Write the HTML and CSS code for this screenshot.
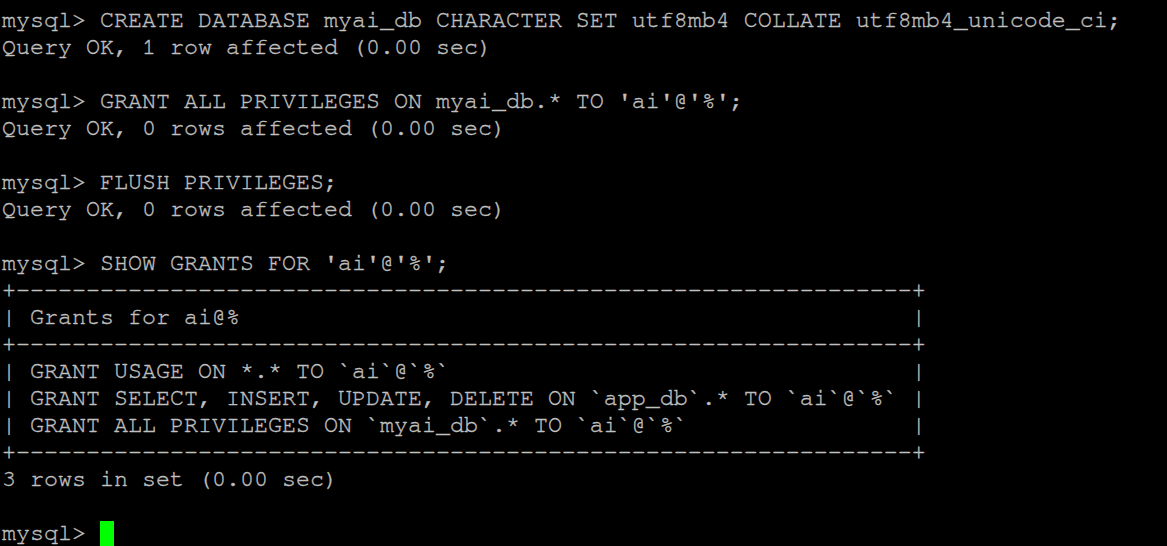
FILE: index.html
```html
<!DOCTYPE html>
<html>
<head>
<meta charset="utf-8">
<link rel="stylesheet" href="styles.css">
</head>
<body>
<pre class="term">mysql&gt; CREATE DATABASE myai_db CHARACTER SET utf8mb4 COLLATE utf8mb4_unicode_ci;
Query OK, 1 row affected (0.00 sec)

mysql&gt; GRANT ALL PRIVILEGES ON myai_db.* TO 'ai'@'%';
Query OK, 0 rows affected (0.00 sec)

mysql&gt; FLUSH PRIVILEGES;
Query OK, 0 rows affected (0.00 sec)

mysql&gt; SHOW GRANTS FOR 'ai'@'%';
+----------------------------------------------------------------+
| Grants for ai@%                                                |
+----------------------------------------------------------------+
| GRANT USAGE ON *.* TO `ai`@`%`                                 |
| GRANT SELECT, INSERT, UPDATE, DELETE ON `app_db`.* TO `ai`@`%` |
| GRANT ALL PRIVILEGES ON `myai_db`.* TO `ai`@`%`                |
+----------------------------------------------------------------+
3 rows in set (0.00 sec)

mysql&gt; <span class="cursor"></span></pre>
</body>
</html>
```

FILE: styles.css
```css
html, body {
  margin: 0;
  padding: 0;
  background: #000;
  height: 100%;
  overflow: hidden;
}
.term {
  margin: 0;
  padding: 7px 0 0 2px;
  font-family: "Nimbus Mono PS", "FreeMono", "Courier", "Liberation Mono", monospace;
  font-size: 23.33px;
  line-height: 27px;
  color: #c0c0c0;
  -webkit-text-stroke: 0.35px #c0c0c0;
  white-space: pre;
}
.cursor {
  background: #00ff00;
  display: inline-block;
  overflow: hidden;
  width: 14px;
  height: 27px;
  vertical-align: -8px;
}
```
